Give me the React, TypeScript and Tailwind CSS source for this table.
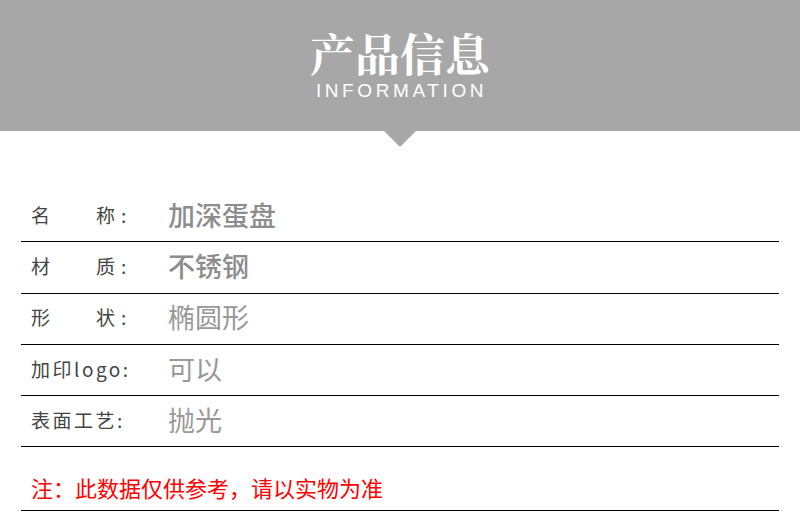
const rows = [
  { label: ['名', '称:'], value: '加深蛋盘', strong: true },
  { label: ['材', '质:'], value: '不锈钢', strong: true },
  { label: ['形', '状:'], value: '椭圆形', strong: false },
  { label: ['加印logo:'], value: '可以', strong: false },
  { label: ['表面工艺:'], value: '抛光', strong: false },
];

export default function App() {
  return (
    <div className="h-[513px] w-[800px] overflow-hidden bg-white font-['Noto_Sans_CJK_SC',sans-serif]">
      <div className="flex h-[131px] flex-col items-center bg-[#a7a7a7] pt-[30px] text-white">
        <h1 className="text-[45px] leading-[46px] font-bold font-['Noto_Serif_CJK_SC','Noto_Sans_CJK_SC',serif]">
          产品信息
        </h1>
        <p className="mt-[5px] pl-[3px] text-[19px] leading-[20px] font-light tracking-[3.6px] font-['Liberation_Sans',sans-serif]">
          INFORMATION
        </p>
      </div>
      <div className="flex justify-center">
        <div className="h-0 w-0 border-x-[16px] border-t-[16px] border-x-transparent border-t-[#a7a7a7]" />
      </div>
      <div className="mx-[21px] mt-[44px]">
        {rows.map((row) => (
          <div
            key={row.value}
            className="flex h-[51.3px] items-center border-b border-black pb-[2px]"
          >
            <div className="flex w-[147px] pl-[10px] text-[19px] tracking-[2.5px] text-[#444]">
              {row.label.length === 2 ? (
                <>
                  <span className="w-[65px]">{row.label[0]}</span>
                  <span className="tracking-[6px]">{row.label[1]}</span>
                </>
              ) : (
                <span>{row.label[0]}</span>
              )}
            </div>
            <span
              className={
                row.strong
                  ? 'text-[27px] font-medium text-[#8d8d8d]'
                  : 'text-[27px] font-normal text-[#999]'
              }
            >
              {row.value}
            </span>
          </div>
        ))}
        <div className="flex h-[64px] items-center border-b border-black pt-[18px] pl-[10px]">
          <span className="text-[22px] text-[#ff0000]">
            注：此数据仅供参考，请以实物为准
          </span>
        </div>
      </div>
    </div>
  );
}
